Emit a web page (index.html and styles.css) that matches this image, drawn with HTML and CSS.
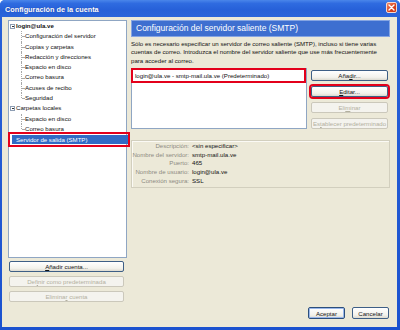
FILE: index.html
```html
<!DOCTYPE html>
<html lang="es">
<head>
<meta charset="utf-8">
<title>Configuración de la cuenta</title>
<link rel="stylesheet" href="styles.css">
</head>
<body>
<div class="window">
  <div class="titlebar">
    <span class="title">Configuración de la cuenta</span>
    <span class="close"><svg width="7" height="7" viewBox="0 0 7 7"><path d="M1 1 L6 6 M6 1 L1 6" stroke="#fff" stroke-width="1.4" stroke-linecap="round"/></svg></span>
  </div>
  <div class="client">
    <div class="main">
      <div class="left">
        <div class="tree">
          <div class="root"><span class="toggle"></span><b>login@ula.ve</b></div>
          <div class="group">
            <div class="child">Configuración del servidor</div>
            <div class="child">Copias y carpetas</div>
            <div class="child">Redacción y direcciones</div>
            <div class="child">Espacio en disco</div>
            <div class="child">Correo basura</div>
            <div class="child">Acuses de recibo</div>
            <div class="child">Seguridad</div>
          </div>
          <div class="root"><span class="toggle"></span>Carpetas locales</div>
          <div class="group">
            <div class="child">Espacio en disco</div>
            <div class="child">Correo basura</div>
          </div>
          <div class="root leaf mark"><span class="sel">Servidor de salida (SMTP)</span></div>
        </div>
        <div class="leftbtns">
          <button class="btn"><u>A</u>ñadir cuenta...</button>
          <button class="btn" disabled>Def<u>i</u>nir como predeterminada</button>
          <button class="btn" disabled>Elimina<u>r</u> cuenta</button>
        </div>
      </div>
      <div class="right">
        <div class="header">Configuración del servidor saliente (SMTP)</div>
        <p class="intro">Sólo es necesario especificar un servidor de correo saliente (SMTP), incluso si tiene varias cuentas de correo. Introduzca el nombre del servidor saliente que use más frecuentemente para acceder al correo.</p>
        <div class="serverrow">
          <div class="list">
            <div class="item mark">login@ula.ve - smtp-mail.ula.ve (Predeterminado)</div>
          </div>
          <div class="sidebtns">
            <button class="btn">Aña<u>d</u>ir...</button>
            <button class="btn mark"><u>E</u>ditar...</button>
            <button class="btn" disabled>Eli<u>m</u>inar</button>
            <button class="btn" disabled>Es<u>t</u>ablecer predeterminado</button>
          </div>
        </div>
        <div class="details">
          <span class="lbl">Descripción:</span><span class="val">&lt;sin especificar&gt;</span>
          <span class="lbl">Nombre del servidor:</span><span class="val">smtp-mail.ula.ve</span>
          <span class="lbl">Puerto:</span><span class="val">465</span>
          <span class="lbl">Nombre de usuario:</span><span class="val">login@ula.ve</span>
          <span class="lbl">Conexión segura:</span><span class="val">SSL</span>
        </div>
      </div>
    </div>
    <div class="footer">
      <button class="btn default">Aceptar</button>
      <button class="btn">Cancelar</button>
    </div>
  </div>
</div>
</body>
</html>
```

FILE: styles.css
```css
html, body {
  margin: 0;
  padding: 0;
}
body {
  width: 400px;
  height: 330px;
  overflow: hidden;
  font-family: "Liberation Sans", Arial, sans-serif;
  font-size: 6.1px;
  color: #111;
}
.window {
  width: 400px;
  height: 330px;
  display: flex;
  flex-direction: column;
  background: linear-gradient(#2a62d8, #1b52cf);
  border-radius: 5px 5px 0 0;
  box-sizing: border-box;
}
.titlebar {
  height: 17px;
  flex: none;
  display: flex;
  align-items: center;
  justify-content: space-between;
  padding: 0 3px 0 5px;
  background: linear-gradient(#4a86ea 0%, #2f6be0 20%, #2660d8 60%, #2a64da 100%);
  border-radius: 5px 5px 0 0;
}
.title {
  color: #fff;
  font-weight: bold;
  font-size: 7.3px;
  padding-top: 1px;
  text-shadow: 0 0 1px #17379a;
}
.close {
  width: 11px;
  height: 11px;
  box-sizing: border-box;
  border: 1px solid #f4d9d0;
  border-radius: 2px;
  background: linear-gradient(135deg, #f08a68, #d8401c 60%, #c9381a);
  display: flex;
  align-items: center;
  justify-content: center;
  margin-top: -3px;
}
.close svg { display: block; }
.client {
  flex: 1;
  margin: 0 3px 3px 2px;
  background: #ece9d8;
  display: flex;
  flex-direction: column;
}
.main {
  display: flex;
  padding: 3px 0 0 6px;
}
.left {
  width: 119px;
  flex: none;
  display: flex;
  flex-direction: column;
}
.tree {
  height: 238px;
  box-sizing: border-box;
  background: #fff;
  border: 1px solid #8fa6c3;
  line-height: 10.3px;
  white-space: nowrap;
}
.root {
  display: flex;
  align-items: center;
  height: 10.3px;
  padding-left: 1px;
}
.root b { font-weight: bold; }
.toggle {
  width: 5px;
  height: 5px;
  box-sizing: border-box;
  border: 1px solid #8d9db3;
  margin-right: 1px;
  position: relative;
  background: #fff;
}
.toggle::after {
  content: "";
  position: absolute;
  left: 0.5px;
  right: 0.5px;
  top: 1px;
  height: 1px;
  background: #333;
}
.root.leaf { padding-left: 3px; }
.sel {
  display: block;
  flex: 1;
  background: #316ac5;
  color: #fff;
  padding-left: 4px;
  height: 9px;
  line-height: 9px;
}
.child {
  position: relative;
  height: 10.3px;
  padding-left: 16px;
}
.child::before {
  content: "";
  position: absolute;
  left: 12px;
  top: 0;
  bottom: 0;
  border-left: 1px dotted #a8a8a8;
}
.child:last-child::before { bottom: 50%; }
.child::after {
  content: "";
  position: absolute;
  left: 13px;
  top: 50%;
  width: 2px;
  border-top: 1px dotted #a8a8a8;
}
.mark {
  outline: 2px solid #e3001b;
  outline-offset: 0;
}
.root.mark {
  margin-left: 1px;
  margin-right: -2px;
  padding-left: 2px;
  height: 11px;
}
.leftbtns {
  display: flex;
  flex-direction: column;
  gap: 4px;
  margin-top: 3px;
  padding-left: 1px;
  width: 115px;
}
.btn {
  font-family: inherit;
  font-size: 6.1px;
  color: #111;
  height: 11px;
  padding: 0;
  margin: 0;
  box-sizing: border-box;
  border: 1px solid #3e5f86;
  border-radius: 2px;
  background: linear-gradient(#ffffff, #f3f2ec 70%, #dcdad0);
  line-height: 9px;
  white-space: nowrap;
}
.btn:disabled {
  color: #b3b09f;
  border-color: #cbc8bb;
  background: #f4f3ee;
}
.btn u { text-decoration: underline; }
.right {
  width: 259px;
  margin-left: 4px;
  display: flex;
  flex-direction: column;
}
.header {
  height: 17px;
  box-sizing: border-box;
  background: #3e6fd0;
  border: 1px solid #86a5e2;
  color: #fff;
  font-size: 8.5px;
  line-height: 15px;
  padding-left: 4px;
}
.intro {
  margin: 3px 0 0 0;
  line-height: 8.4px;
  padding-right: 2px;
}
.serverrow {
  display: flex;
  margin-top: 2.5px;
  gap: 4px;
}
.list {
  flex: 1;
  height: 61px;
  box-sizing: border-box;
  background: #fff;
  border: 1px solid #8fa6c3;
  padding: 1px 2px 0 1px;
}
.item {
  height: 11px;
  line-height: 11px;
  padding-left: 2px;
  white-space: nowrap;
}
.sidebtns {
  width: 77px;
  margin-right: 2px;
  display: flex;
  flex-direction: column;
  gap: 5px;
  padding-top: 2px;
}
.sidebtns .mark { outline-offset: 0; }
.details {
  margin-top: 11px;
  height: 48px;
  box-sizing: border-box;
  border: 1px solid #d2cfbe;
  box-shadow: inset 1px 1px 0 #fbfaf5;
  display: grid;
  grid-template-columns: 57px 1fr;
  column-gap: 3px;
  align-content: start;
  padding: 1px 0 0 0;
  line-height: 8.8px;
}
.lbl {
  text-align: right;
  color: #8d8b82;
  white-space: nowrap;
}
.val { color: #111; }
.footer {
  margin-top: auto;
  display: flex;
  justify-content: flex-end;
  gap: 7px;
  padding: 0 8px 8px 0;
}
.footer .btn {
  width: 37px;
  height: 12px;
}
.footer .btn.default {
  border-color: #2c4f7c;
  box-shadow: inset 0 0 0 1px #9ab7ea;
}
```
